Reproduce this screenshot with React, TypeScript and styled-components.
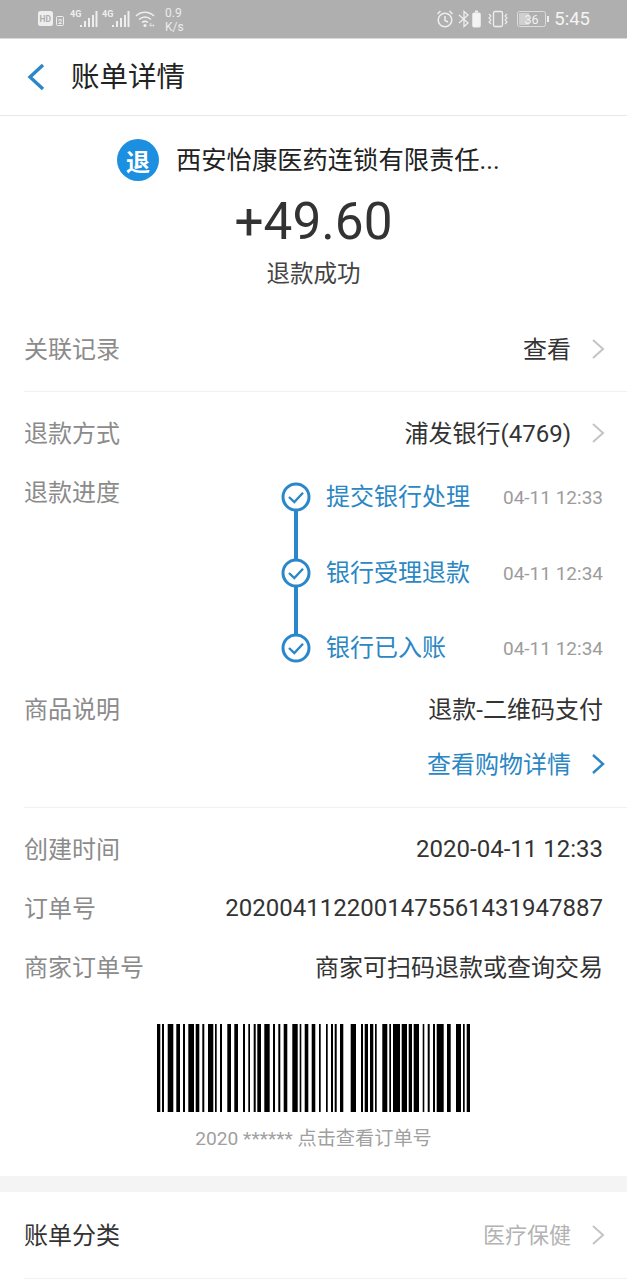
import React from "react";
import styled, { createGlobalStyle } from "styled-components";

const Global = createGlobalStyle`
  html, body { margin: 0; padding: 0; background: #fff; }
  * { box-sizing: border-box; }
  body { font-family: Roboto, "Noto Sans CJK SC", sans-serif; }
`;
const Page = styled.div`
  width: 627px; height: 1280px; overflow: hidden; background: #fff;
  display: flex; flex-direction: column;
`;
const StatusBar = styled.div`
  height: 39px; flex: none; background: #afafaf; border-bottom: 1px solid #d9d9d9;
  display: flex; align-items: center; justify-content: space-between;
  padding: 0 37px 1px 38px; color: #f2f2f2;
`;
const StatusGroup = styled.div`display: flex; align-items: center;`;
const Speed = styled.div`
  font-size: 12px; line-height: 14px; margin: 2px 0 0 8px; width: 20px; text-align: left; color: #ececec;
`;
const Clock = styled.span`font-size: 18.5px; margin-left: 5px; color: #f4f4f4;`;
const Header = styled.div`
  height: 77px; flex: none; display: flex; align-items: center; padding-left: 26px;
  border-bottom: 1px solid #e8e8e8;
`;
const Title = styled.div`
  font-size: 28.5px; color: #222; margin: 2px 0 0 25px; line-height: 1;
`;
const Merchant = styled.div`
  height: 88px; flex: none; display: flex; align-items: center; padding: 0 0 0 117px;
`;
const Logo = styled.div`
  width: 42px; height: 42px; border-radius: 50%; background: #1c8fe0; color: #fff;
  font-size: 24px; font-weight: 700; display: flex; align-items: center; justify-content: center;
`;
const MerchantName = styled.div`
  font-size: 25.3px; color: #222; margin-left: 17px; white-space: nowrap; padding-bottom: 4px;
`;
const Amount = styled.div`
  height: 36px; flex: none; display: flex; align-items: center; justify-content: center;
  font-size: 51.3px; color: #333; line-height: 36px;
`;
const Status = styled.div`
  margin-top: 16px; height: 36px; flex: none; text-align: center; font-size: 23.5px; line-height: 36px; color: #444;
`;
const Row = styled.div<{ $h: number; $line?: boolean; $pt?: number; $pb?: number }>`
  height: ${p => p.$h}px; flex: none; margin-left: 24px; padding: ${p => p.$pt ?? 0}px 24px ${p => p.$pb ?? 0}px 0;
  display: flex; align-items: center; justify-content: space-between;
  ${p => p.$line ? "border-bottom: 1px solid #f1f1f1;" : ""}
`;
const Label = styled.span<{ $dark?: boolean }>`
  font-size: 24px; color: ${p => p.$dark ? "#333" : "#8b8b8b"}; white-space: nowrap;
`;
const Value = styled.span<{ $tone?: string; $num?: boolean }>`
  font-size: 24px; color: ${p => p.$tone || "#333"}; white-space: nowrap; display: flex; align-items: center;
  ${p => p.$num ? "padding-top: 4px;" : ""}
`;
const Progress = styled.div`
  flex: none; margin-left: 24px; padding-right: 24px; height: 214px;
  display: flex; justify-content: space-between;
`;
const ProgressLabel = styled(Label)`line-height: 36px; margin-top: 5px; height: 36px;`;
const Steps = styled.div`display: flex; flex-direction: column; width: 322px; padding-top: 12px;`;
const Step = styled.div`
  display: flex; height: 75.5px; flex: none; align-items: flex-start;
  &:last-child { height: 30px; }
`;
const Rail = styled.div`
  width: 30px; flex: none; display: flex; flex-direction: column; align-items: center; height: 100%; margin-right: 15px;
`;
const Line = styled.div`flex: 1; width: 4px; background: #2a87c9; margin: -1px 0;`;
const StepText = styled.div`
  font-size: 24px; line-height: 30px; color: #2b87c4; flex: 1; white-space: nowrap;
`;
const StepTime = styled.div`
  font-size: 19px; line-height: 30px; color: #9c9c9c; white-space: nowrap; padding-top: 1px;
`;
const BarcodeWrap = styled.div`
  display: flex; justify-content: center; flex: none; margin-top: 20px; height: 88px;
`;
const Caption = styled.div`
  text-align: center; font-size: 19.2px; line-height: 24px; color: #a0a0a0; margin-top: 15px; flex: none;
`;
const Band = styled.div`height: 16px; background: #f4f4f4; flex: none; margin-top: 25px;`;
const Faded = styled.span`
  color: #b3b3b3; font-size: 22px;
`;

const ChevronSvg = styled.svg`margin: 3px -2px 0 20px; flex: none;`;
const Chevron = ({ color = "#c4c4c4", w = 2 }: { color?: string; w?: number }) => (
  <ChevronSvg width="14" height="22" viewBox="0 0 14 22">
    <path d="M2 2 L12 11 L2 20" fill="none" stroke={color} strokeWidth={w} />
  </ChevronSvg>
);

const Check = () => (
  <svg width="30" height="30" viewBox="0 0 30 30" style={{ flex: "none" }}>
    <circle cx="15" cy="15" r="13" fill="#fff" stroke="#2a87c9" strokeWidth="3" />
    <path d="M8 15 L13.3 20 L22 10.800" fill="none" stroke="#2a87c9" strokeWidth="2.400" />
  </svg>
);

const bars: [number, number][] = [
  [157,160.3],[162,164],[167.7,173.3],[176.3,180],[183,185],[188.3,194],[195.7,199.3],[202.3,204.3],
  [208,213.3],[215,216.7],[220,222],[227.3,231],[234.3,238],[243,245],[248.3,250],[253.7,255.7],
  [257.3,261],[264.3,269.7],[273,275],[278.3,280.3],[283.7,287.3],[292.3,297.7],[299.7,301.3],
  [304.7,308.3],[311.7,315.3],[319,320.7],[326,327.7],[331,333],[334.7,336.7],[340,343.3],
  [350.7,356],[361,363],[364.7,368],[370,373.3],[375,376.7],[382.3,387.3],[389.3,391],[393,400],
  [401.7,407],[408.7,412],[413.7,419],[422.7,424.3],[427.7,429.7],[433,435],[436.7,443.7],
  [447,450.7],[456,461],[463,464.7],[466.7,470],
];
const Barcode = () => (
  <svg width="313" height="88" viewBox="157 0 313 88">
    {bars.map(([a, b]) => <rect key={a} x={a} y={0} width={b - a} height={88} fill="#000" />)}
  </svg>
);

const SignalBars = () => (
  <svg width="28" height="20" viewBox="0 0 28 20" style={{ marginLeft: 4 }}>
    <text x="0" y="8" fontSize="9" fontWeight="700" fill="#eee" fontFamily="Roboto">4G</text>
    <rect x="10" y="16" width="2" height="2" fill="#eee" />
    <rect x="14" y="12" width="2" height="6" fill="#eee" />
    <rect x="18" y="9" width="2" height="9" fill="#eee" />
    <rect x="22" y="6" width="2" height="12" fill="#eee" />
    <rect x="25.500" y="2" width="2" height="16" fill="#eee" />
  </svg>
);

const StatusLeft = () => (
  <StatusGroup>
    <svg width="28" height="16" viewBox="0 0 28 16">
      <rect x="0" y="0" width="15" height="15" rx="2.500" fill="#eee" />
      <text x="1.500" y="11" fontSize="8.500" fontWeight="700" fill="#afafaf" fontFamily="Roboto">HD</text>
      <rect x="18.500" y="5.500" width="7" height="9" rx="1" fill="none" stroke="#eee" />
      <text x="20" y="13" fontSize="7.500" fontWeight="700" fill="#eee" fontFamily="Roboto">2</text>
    </svg>
    <SignalBars />
    <SignalBars />
    <svg width="22" height="18" viewBox="0 0 22 18" style={{ marginLeft: 5 }}>
      <path d="M1 6 C6 1 14 1 19 6 M4 9.500 C7.500 6 12.500 6 16 9.500 M7 12.500 C9 11 11 11 13 12.500" fill="none" stroke="#eee" strokeWidth="1.500" />
      <circle cx="10" cy="15.500" r="1.600" fill="#eee" />
      <text x="14" y="17" fontSize="5" fill="#eee" fontFamily="Roboto">4+</text>
    </svg>
    <Speed>0.9<br />K/s</Speed>
  </StatusGroup>
);

const StatusRight = () => (
  <StatusGroup>
    <svg width="18" height="20" viewBox="1 0 18 20">
      <circle cx="10" cy="11" r="6.800" fill="none" stroke="#eee" strokeWidth="1.500" />
      <path d="M10 7 V11.500 L13 13 M2.500 5 L5.500 2 M17.500 5 L14.500 2" fill="none" stroke="#eee" strokeWidth="1.500" />
    </svg>
    <svg width="12" height="18" viewBox="0 0 12 18" style={{ marginLeft: 4 }}>
      <path d="M1 5 L10 13 L6 16.500 V1.500 L10 5 L1 13" fill="none" stroke="#eee" strokeWidth="1.300" />
    </svg>
    <svg width="9" height="18" viewBox="0 0 9 18" style={{ marginLeft: 2 }}>
      <rect x="0.750" y="3" width="7.500" height="14" rx="1" fill="#f4f4f4" stroke="#eee" />
      <rect x="3" y="0.500" width="3" height="2" fill="#eee" />
    </svg>
    <svg width="22" height="18" viewBox="0 0 22 18" style={{ marginLeft: 6 }}>
      <rect x="6.500" y="1.500" width="9" height="15" rx="1.500" fill="none" stroke="#eee" strokeWidth="1.300" />
      <path d="M2 4 L4 6 L2 8 L4 10 L2 12 L4 14 M20 4 L18 6 L20 8 L18 10 L20 12 L18 14" fill="none" stroke="#eee" strokeWidth="1.100" />
    </svg>
    <svg width="32" height="16" viewBox="0 0 32 16" style={{ marginLeft: 8 }}>
      <rect x="0.500" y="0.500" width="28" height="15" rx="2" fill="none" stroke="#ddd" />
      <rect x="2" y="2" width="10" height="12" fill="#cfcfcf" />
      <rect x="30" y="5" width="2" height="6" fill="#eee" />
      <text x="7.500" y="12.500" fontSize="12.500" fill="#f2f2f2" fontFamily="Roboto">36</text>
    </svg>
    <Clock>5:45</Clock>
  </StatusGroup>
);

const steps = [
  { name: "提交银行处理", time: "04-11 12:33" },
  { name: "银行受理退款", time: "04-11 12:34" },
  { name: "银行已入账", time: "04-11 12:34" },
];

export default function App() {
  return (
    <Page>
      <Global />
      <StatusBar><StatusLeft /><StatusRight /></StatusBar>
      <Header>
        <svg width="20" height="28" viewBox="0 0 20 28">
          <path d="M17 2 L4 14 L17 26" fill="none" stroke="#2b88c8" strokeWidth="3.400" />
        </svg>
        <Title>账单详情</Title>
      </Header>
      <Merchant>
        <Logo>退</Logo>
        <MerchantName>西安怡康医药连锁有限责任...</MerchantName>
      </Merchant>
      <Amount>+49.60</Amount>
      <Status>退款成功</Status>
      <Row $h={100} $pt={11} $line>
        <Label>关联记录</Label>
        <Value>查看<Chevron /></Value>
      </Row>
      <Row $h={78}>
        <Label>退款方式</Label>
        <Value>浦发银行(4769)<Chevron /></Value>
      </Row>
      <Progress>
        <ProgressLabel>退款进度</ProgressLabel>
        <Steps>
          {steps.map((s, i) => (
            <Step key={s.name}>
              <Rail><Check />{i < steps.length - 1 && <Line />}</Rail>
              <StepText>{s.name}</StepText>
              <StepTime>{s.time}</StepTime>
            </Step>
          ))}
        </Steps>
      </Progress>
      <Row $h={46}>
        <Label>商品说明</Label>
        <Value>退款-二维码支付</Value>
      </Row>
      <Row $h={78} $pb={12} $line>
        <span />
        <Value $tone="#2b87c4">查看购物详情<Chevron color="#2b87c4" w={2.4} /></Value>
      </Row>
      <Row $h={78}>
        <Label>创建时间</Label>
        <Value $num>2020-04-11 12:33</Value>
      </Row>
      <Row $h={40}>
        <Label>订单号</Label>
        <Value $num>2020041122001475561431947887</Value>
      </Row>
      <Row $h={78}>
        <Label>商家订单号</Label>
        <Value>商家可扫码退款或查询交易</Value>
      </Row>
      <BarcodeWrap><Barcode /></BarcodeWrap>
      <Caption>2020 ****** 点击查看订单号</Caption>
      <Band />
      <Row $h={87} $pb={4} $line>
        <Label $dark>账单分类</Label>
        <Value><Faded>医疗保健</Faded><Chevron /></Value>
      </Row>
    </Page>
  );
}
